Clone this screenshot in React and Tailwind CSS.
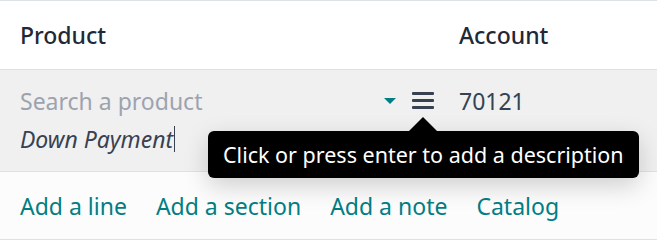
import React from "react";

const font = { fontFamily: '"Noto Sans", "Open Sans", sans-serif' };

const MenuIcon = () => (
  <svg width="22" height="18" viewBox="0 0 22 18" className="block">
    <rect x="0" y="0" width="22" height="3" rx="1" fill="#374151" />
    <rect x="0" y="7" width="22" height="3" rx="1" fill="#374151" />
    <rect x="0" y="14" width="22" height="3" rx="1" fill="#374151" />
  </svg>
);

export default function App() {
  return (
    <div className="w-[657px] h-[241px] bg-white text-[23px] leading-[28px] overflow-hidden" style={font}>
      {/* Header */}
      <div className="flex h-[70px] items-center border-t border-b border-[#dee2e6] text-[#1f2937] font-medium">
        <div className="w-[439px] pl-5">Product</div>
        <div className="flex-1 pl-5">Account</div>
      </div>

      {/* Editable row */}
      <div className="flex h-[102px] bg-[#f0f0f0] border-b border-[#dee2e6]">
        <div className="w-[439px] pl-5 pr-[5px] pt-[17px] relative">
          <div className="flex items-center h-[28px]">
            <span className="flex-1 text-[#9ca3af]">Search a product</span>
            <span className="w-0 h-0 border-l-[6px] border-r-[6px] border-t-[6px] border-l-transparent border-r-transparent border-t-[#017e84] mr-4" />
            <MenuIcon />
          </div>
          <div className="mt-[10px] flex items-center h-[28px] italic text-[#374151]">
            Down Payment
            <span className="inline-block w-px h-[26px] bg-[#374151] ml-px" />
          </div>

          {/* Tooltip */}
          <div className="absolute left-[208px] top-[61px] z-10">
            <div className="absolute left-[201px] -top-[14px] w-0 h-0 border-l-[14px] border-r-[14px] border-b-[14px] border-l-transparent border-r-transparent border-b-black" />
            <div className="bg-black text-white rounded-md px-[15px] h-[47px] flex items-center whitespace-nowrap text-[21.5px] shadow-[0_8px_24px_rgba(0,0,0,0.18)]">
              Click or press enter to add a description
            </div>
          </div>
        </div>
        <div className="flex-1 pl-5 pt-[17px] text-[#374151]">
          <div className="h-[28px] flex items-center">70121</div>
        </div>
      </div>

      {/* Footer actions */}
      <div className="flex h-[68px] items-center gap-[29px] pl-5 bg-[#fcfcfc] border-b border-[#dee2e6] text-[#017e84]">
        <span>Add a line</span>
        <span>Add a section</span>
        <span>Add a note</span>
        <span>Catalog</span>
      </div>
    </div>
  );
}
